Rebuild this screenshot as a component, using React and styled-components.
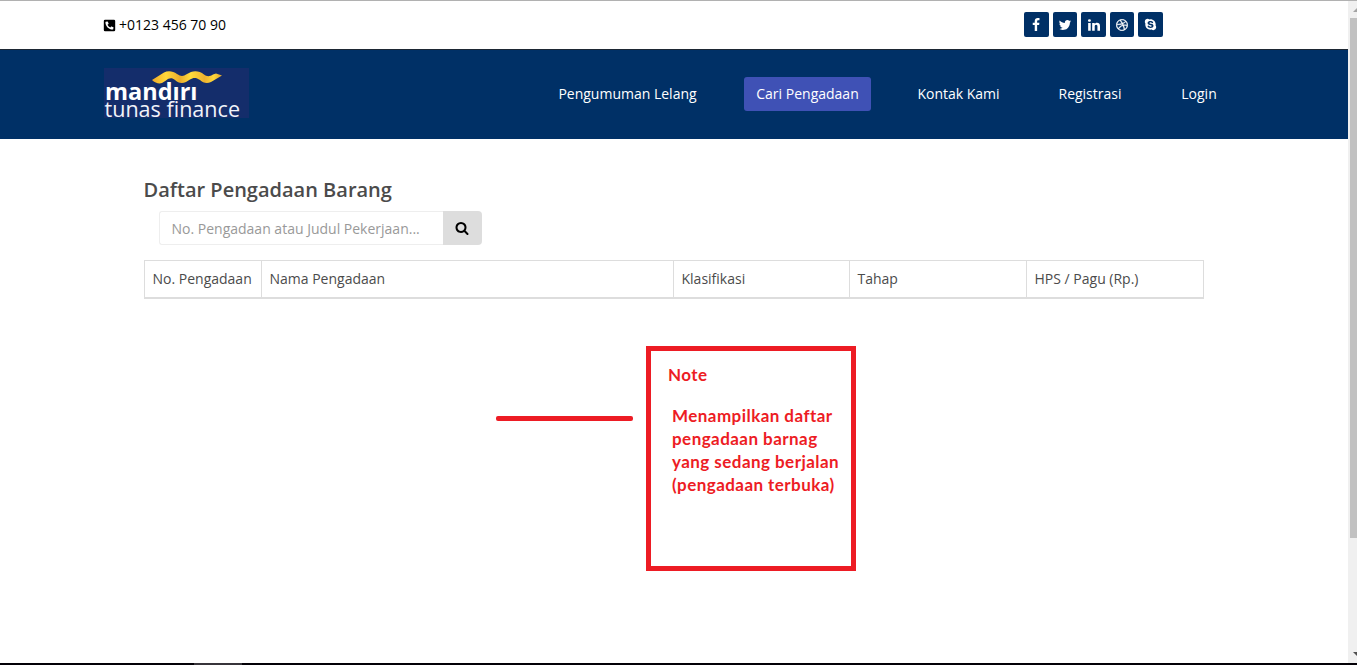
import React from "react";
import styled, { createGlobalStyle } from "styled-components";
import { FaPhoneSquareAlt, FaDribbble, FaSkype } from "react-icons/fa";

const GlobalStyle = createGlobalStyle`
  *, *::before, *::after { box-sizing: border-box; }
  body {
    margin: 0;
    background: #fff;
    font-family: "Open Sans", "Noto Sans", sans-serif;
    font-size: 14px;
    overflow: hidden;
  }
`;

const Screen = styled.div`
  position: relative;
  display: flex;
  flex-direction: column;
  width: 1357px;
  height: 665px;
  border-top: 1px solid #b1b1b1;
`;

const Viewport = styled.div`
  flex: 1;
  display: flex;
  min-height: 0;
`;

const Page = styled.div`
  flex: 1;
  min-width: 0;
`;

const TopBar = styled.div`
  height: 48px;
  display: flex;
  align-items: flex-start;
  justify-content: space-between;
  padding: 11px 185px 0 103px;
`;

const Phone = styled.div`
  display: flex;
  align-items: center;
  gap: 3px;
  margin-top: 3px;
  color: #000;
  line-height: 20px;
`;

const Socials = styled.div`
  display: flex;
  gap: 4px;
`;

const SocialLink = styled.a`
  display: flex;
  align-items: center;
  justify-content: center;
  width: 24.6px;
  height: 25px;
  border-radius: 2px;
  background: #003066;
  color: #fff;
`;

const Header = styled.header`
  height: 90px;
  display: flex;
  align-items: flex-start;
  justify-content: space-between;
  padding: 18px 119px 0 104px;
  background: #003066;
  border-top: 1px solid #1d2733;
`;

const Nav = styled.nav`
  display: flex;
  align-items: center;
  gap: 35px;
  margin-top: 9px;
`;

const NavItem = styled.a`
  height: 34px;
  width: ${(p) => p.$width}px;
  padding-bottom: 2px;
  display: flex;
  align-items: center;
  justify-content: center;
  white-space: nowrap;
  border-radius: 3px;
  color: #fff;
  background: ${(p) => (p.$active ? "#3f51b5" : "transparent")};
`;

const Content = styled.main`
  padding: 38px 144px 0;
`;

const Title = styled.h1`
  margin: 0 0 9px -0.5px;
  font-size: 20px;
  line-height: 25px;
  font-weight: 600;
  color: #4b4b4b;
`;

const SearchGroup = styled.div`
  display: flex;
  width: 323px;
  height: 34px;
  margin: 0 0 15px 15px;
`;

const SearchInput = styled.input`
  flex: 1;
  min-width: 0;
  padding: 0 11.5px;
  border: 1px solid #eee;
  border-right: 0;
  border-radius: 3px 0 0 3px;
  font: inherit;
  color: #555;
  outline: none;
  &::placeholder { color: #999; opacity: 1; }
`;

const SearchButton = styled.button`
  display: flex;
  align-items: center;
  justify-content: center;
  width: 39px;
  padding: 0 2px 0 0;
  border: 0;
  border-radius: 0 4px 4px 0;
  background: #ddd;
  color: #000;
`;

const TableHead = styled.div`
  display: grid;
  grid-template-columns: 117px 412px 176px 177px 178px;
  height: 39px;
  border-top: 1px solid #ddd;
  border-bottom: 2px solid #ddd;
  border-right: 1px solid #ddd;
`;

const HeadCell = styled.div`
  padding: 8px 0 0 7.5px;
  border-left: 1px solid #ddd;
  color: #4b4b4b;
  line-height: 20px;
  white-space: nowrap;
`;

const ScrollTrack = styled.div`
  display: flex;
  flex-direction: column;
  align-items: flex-end;
  justify-content: space-between;
  width: 9px;
  background: #f0f0f0;
`;

const ScrollThumb = styled.div`
  width: 7px;
  height: 520px;
  margin: 6px 0 auto;
  background: #c1c1c1;
`;

const ScrollArrow = styled.svg`
  display: block;
  width: 4px;
  height: 4px;
  margin: ${(p) => p.$margin};
`;

const Taskbar = styled.div`
  height: 2px;
  padding-left: 194px;
  background: #030006;
`;

const TaskItem = styled.div`
  width: 48px;
  height: 2px;
  background: #37343a;
`;

const Annotation = styled.div`
  position: absolute;
  left: 496px;
  top: 345px;
  display: flex;
  gap: 13px;
`;

const Pointer = styled.div`
  width: 137px;
  height: 5px;
  margin-top: 70px;
  border-radius: 2px;
  background: #ed1c24;
`;

const NoteBox = styled.div`
  width: 210px;
  height: 225px;
  padding: 12px 0 0 17px;
  border: 5px solid #ed1c24;
  color: #ed1c24;
  font-family: Lato, "Liberation Sans", sans-serif;
  font-size: 17px;
  font-weight: 700;
  line-height: 23px;
  letter-spacing: 0.45px;
`;

const NoteTitle = styled.div`
  margin-bottom: 18px;
`;

const NoteLine = styled.div`
  margin-left: 4px;
  white-space: nowrap;
`;

const LogoMark = styled.svg`
  display: block;
  overflow: visible;
`;

const paths = {
  facebook:
    "M1343 12v264h-157q-86 0-116 36t-30 108v189h293l-39 296h-254v759h-306v-759h-255v-296h255v-218q0-186 104-288.5t277-102.5q147 0 228 12z",
  twitter:
    "M1684 408q-67 98-162 167 1 14 1 42 0 130-38 259.5t-115.5 248.5-184.5 210.5-258 146-323 54.5q-271 0-496-145 35 4 78 4 225 0 401-138-105-2-188-64.5t-114-159.5q33 5 61 5 43 0 85-11-112-23-185.5-111.5t-73.5-205.5v-4q68 38 146 41-66-44-105-115t-39-154q0-88 44-163 121 149 294.5 238.5t371.5 99.5q-8-38-8-74 0-134 94.5-228.5t228.5-94.5q140 0 236 102 109-21 205-78-37 115-142 178 93-10 186-50z",
  linkedin:
    "M477 625v991h-330v-991h330zm21-306q1 73-50.5 122t-135.5 49h-2q-82 0-132-49t-50-122q0-74 51.5-122.5t134.5-48.5 133 48.5 51 122.5zm1166 729v568h-329v-530q0-105-40.5-164.5t-126.5-59.5q-63 0-105.5 34.5t-63.5 85.5q-11 30-11 81v553h-329q2-399 2-647t-1-296l-1-48h329v144h-2q20-32 41-56t56.5-52 87-43.5 114.5-15.5q171 0 275 113.5t104 332.5z",
  search:
    "M1216 832q0-185-131.5-316.5t-316.5-131.5-316.5 131.5-131.5 316.5 131.5 316.5 316.5 131.5 316.5-131.5 131.5-316.5zm512 832q0 52-38 90t-90 38q-54 0-90-38l-343-342q-179 124-399 124-143 0-273.5-55.5t-225-150-150-225-55.5-273.5 55.5-273.5 150-225 225-150 273.5-55.5 273.5 55.5 225 150 150 225 55.5 273.5q0 220-124 399l343 343q37 37 37 90z",
};

const Glyph = ({ name, size = 14 }) => (
  <svg width={size} height={size} viewBox="0 0 1792 1792" fill="currentColor" aria-hidden="true">
    <path d={paths[name]} />
  </svg>
);

const Logo = () => (
  <LogoMark width="145" height="50" viewBox="0 0 145 50" role="img" aria-label="Mandiri Tunas Finance">
    <defs>
      <linearGradient id="ribbon" x1="0" x2="1" y1="0" y2="0">
        <stop offset="0" stopColor="#efa928" />
        <stop offset="0.2" stopColor="#ffd83a" />
        <stop offset="0.4" stopColor="#e9ad2c" />
        <stop offset="0.55" stopColor="#ffdc3c" />
        <stop offset="0.75" stopColor="#eeb22e" />
        <stop offset="0.88" stopColor="#ffd83a" />
        <stop offset="1" stopColor="#dfa52c" />
      </linearGradient>
    </defs>
    <rect width="145" height="50" fill="#142d6b" />
    <path
      d="M48 12L60 4.500C64 2.500 69 3 73 6C77 8.500 79 8.500 83 6L87 4C91 2.500 96 3 100 6.500C103 9 106 8.500 109 6.500L112 5.500L118 7.500L107 14C103 16 99 15 96 12C92 9 89 9.500 86 11.500L82 14C78 16 74 15 71 12C68 9.500 65 10 62 12.500L58 15C55 16 51 15 48 12Z"
      fill="url(#ribbon)"
    />
    <text x="1" y="32" textLength="92.500" lengthAdjust="spacingAndGlyphs" fill="#fff" fontFamily="Open Sans" fontWeight="700" fontSize="23.500">
      mandırı
    </text>
    <text x="0.500" y="48.500" textLength="135.500" lengthAdjust="spacingAndGlyphs" fill="#f0f3fa" fontFamily="Open Sans" fontSize="22">
      tunas finance
    </text>
  </LogoMark>
);

const columns = ["No. Pengadaan", "Nama Pengadaan", "Klasifikasi", "Tahap", "HPS / Pagu (Rp.)"];

export default function App() {
  return (
    <>
      <GlobalStyle />
      <Screen>
        <Viewport>
          <Page>
            <TopBar>
              <Phone>
                <FaPhoneSquareAlt size={13} />
                <span>+0123 456 70 90</span>
              </Phone>
              <Socials>
                <SocialLink aria-label="Facebook"><Glyph name="facebook" /></SocialLink>
                <SocialLink aria-label="Twitter"><Glyph name="twitter" /></SocialLink>
                <SocialLink aria-label="LinkedIn"><Glyph name="linkedin" /></SocialLink>
                <SocialLink aria-label="Dribbble"><FaDribbble size={12} stroke="currentColor" strokeWidth={14} /></SocialLink>
                <SocialLink aria-label="Skype"><FaSkype size={13} /></SocialLink>
              </Socials>
            </TopBar>
            <Header>
              <Logo />
              <Nav>
                <NavItem $width={163}>Pengumuman Lelang</NavItem>
                <NavItem $width={127} $active>Cari Pengadaan</NavItem>
                <NavItem $width={105}>Kontak Kami</NavItem>
                <NavItem $width={88}>Registrasi</NavItem>
                <NavItem $width={60}>Login</NavItem>
              </Nav>
            </Header>
            <Content>
              <Title>Daftar Pengadaan Barang</Title>
              <SearchGroup>
                <SearchInput placeholder="No. Pengadaan atau Judul Pekerjaan..." />
                <SearchButton aria-label="Cari"><Glyph name="search" /></SearchButton>
              </SearchGroup>
              <TableHead>
                {columns.map((name) => (
                  <HeadCell key={name}>{name}</HeadCell>
                ))}
              </TableHead>
            </Content>
          </Page>
          <ScrollTrack>
            <ScrollArrow $margin="7px 0 0" viewBox="0 0 4 4">
              <path d="M0 4L4 0V4Z" fill="#a3a3a3" />
            </ScrollArrow>
            <ScrollThumb />
            <ScrollArrow $margin="0 0 7px" viewBox="0 0 4 4">
              <path d="M0 0H4V4Z" fill="#505050" />
            </ScrollArrow>
          </ScrollTrack>
        </Viewport>
        <Taskbar><TaskItem /></Taskbar>
        <Annotation>
          <Pointer />
          <NoteBox>
            <NoteTitle>Note</NoteTitle>
            <NoteLine>Menampilkan daftar</NoteLine>
            <NoteLine>pengadaan barnag</NoteLine>
            <NoteLine>yang sedang berjalan</NoteLine>
            <NoteLine>(pengadaan terbuka)</NoteLine>
          </NoteBox>
        </Annotation>
      </Screen>
    </>
  );
}
